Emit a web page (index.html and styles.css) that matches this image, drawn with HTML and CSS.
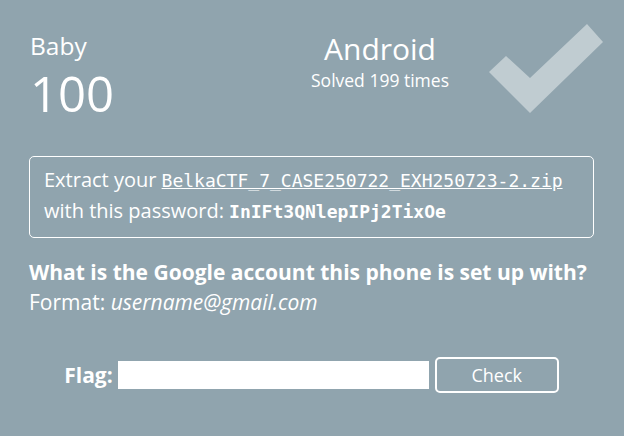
FILE: index.html
```html
<!DOCTYPE html>
<html>
<head>
<meta charset="utf-8">
<link rel="stylesheet" href="styles.css">
</head>
<body>
<div class="task">
  <div class="head">
    <div class="left">
      <div class="level">Baby</div>
      <div class="score">100</div>
    </div>
    <div class="mid">
      <div class="cat">Android</div>
      <div class="solved">Solved 199 times</div>
    </div>
    <svg class="check" width="130" height="100" viewBox="480 20 130 100">
      <polygon points="489,72 506,56 530,78 587,24 603,42 530,113" fill="#c0ccd1"/>
    </svg>
  </div>
  <div class="box">
    Extract your <a class="file" href="#">BelkaCTF_7_CASE250722_EXH250723-2.zip</a><br>
    with this password: <span class="pass">InIFt3QNlepIPj2TixOe</span>
  </div>
  <div class="question">What is the Google account this phone is set up with?</div>
  <div class="format">Format: <em>username@gmail.com</em></div>
  <form class="flag">
    <label class="flag-label">Flag:</label>
    <input class="flag-input" type="text">
    <button class="flag-btn" type="button">Check</button>
  </form>
</div>
</body>
</html>
```
FILE: styles.css
```css
html, body {
  margin: 0;
  padding: 0;
  background: #90a4ae;
}
body {
  font-family: "Open Sans", sans-serif;
  color: #ffffff;
  width: 624px;
  height: 436px;
  overflow: hidden;
}
.task {
  padding: 0 30px 0 29px;
}
.head {
  display: flex;
  align-items: flex-start;
  height: 136px;
}
.left {
  flex: 0 0 251px;
  padding-top: 31px;
}
.level {
  font-size: 24.5px;
  line-height: 29px;
  margin-left: 1px;
}
.score {
  font-size: 49px;
  line-height: 67px;
  font-weight: 400;
  margin-left: 1px;
}
.mid {
  flex: 0 0 200px;
  text-align: center;
  padding-top: 30px;
}
.cat {
  font-size: 30px;
  line-height: 38px;
}
.solved {
  font-size: 17.5px;
  line-height: 24px;
}
.check {
  display: block;
  flex: 0 0 130px;
  margin-top: 20px;
}
.box {
  margin-top: 20px;
  border: 1px solid #ffffff;
  border-radius: 5px;
  padding: 8px 14px 10px;
  font-size: 20px;
  line-height: 30px;
}
.file {
  color: #ffffff;
  font-family: "DejaVu Sans Mono", monospace;
  font-size: 18px;
  text-decoration: underline;
}
.pass {
  font-family: "DejaVu Sans Mono", monospace;
  font-size: 18px;
  font-weight: bold;
}
.question {
  margin-top: 19px;
  font-size: 21px;
  font-weight: bold;
  line-height: 30px;
}
.format {
  font-size: 21px;
  line-height: 30px;
}
.flag {
  margin: 40px 0 0;
  display: flex;
  align-items: center;
  justify-content: center;
}
.flag-label {
  font-size: 21px;
  font-weight: bold;
  margin-right: 5px;
}
.flag-input {
  width: 311px;
  height: 28px;
  box-sizing: border-box;
  border: none;
  background: #ffffff;
  margin: 0 6px 0 0;
  padding: 0 6px;
}
.flag-btn {
  width: 124px;
  height: 36px;
  box-sizing: border-box;
  border: 2px solid #ffffff;
  border-radius: 5px;
  background: transparent;
  color: #ffffff;
  font-family: "Open Sans", sans-serif;
  font-size: 18px;
  margin: 0;
  padding: 0;
}
```
